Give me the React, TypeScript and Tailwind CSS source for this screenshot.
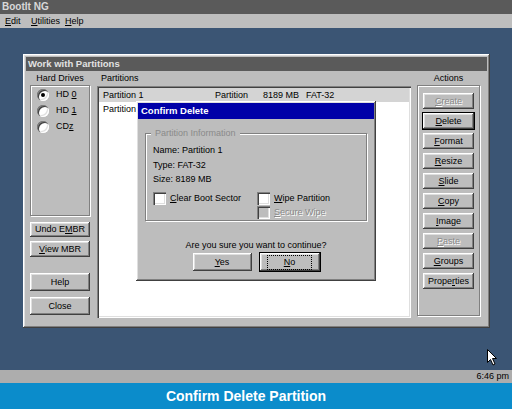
const raised =
  'shadow-[inset_-1px_-1px_0_#404040,inset_1px_1px_0_#ffffff,inset_-2px_-2px_0_#808080,inset_2px_2px_0_#dfdfdf]';
const sunken =
  'shadow-[inset_1px_1px_0_#808080,inset_2px_2px_0_#404040,inset_-1px_-1px_0_#ffffff,inset_-2px_-2px_0_#dfdfdf]';
const etched = 'border border-[#808080] shadow-[1px_1px_0_#ffffff,inset_1px_1px_0_#ffffff]';

function Btn({
  children,
  className = '',
  disabled,
  isDefault,
}: {
  children: React.ReactNode;
  className?: string;
  disabled?: boolean;
  isDefault?: boolean;
}) {
  return (
    <div
      className={`flex items-center justify-center bg-[#bdbdbd] text-[9px] leading-none whitespace-nowrap ${raised} ${
        isDefault ? 'outline outline-1 outline-black' : ''
      } ${disabled ? 'text-[#8a8a8a] [text-shadow:1px_1px_0_#ffffff]' : 'text-black'} ${className}`}
    >
      <span>{children}</span>
    </div>
  );
}

function Radio({ checked, children }: { checked?: boolean; children: React.ReactNode }) {
  return (
    <div className="flex items-center h-[16px]">
      <div className={`w-[12px] h-[12px] rounded-full bg-white flex items-center justify-center ${sunken}`}>
        {checked && <div className="w-[4px] h-[4px] rounded-full bg-black" />}
      </div>
      <span className="ml-[7px] text-[9px] whitespace-nowrap">{children}</span>
    </div>
  );
}

function Check({ children, disabled }: { children: React.ReactNode; disabled?: boolean }) {
  return (
    <div className="flex items-center h-[14px]">
      <div className={`w-[13px] h-[13px] shrink-0 ${disabled ? 'bg-[#bdbdbd]' : 'bg-white'} ${sunken}`} />
      <span
        className={`ml-[4px] text-[9px] whitespace-nowrap ${
          disabled ? 'text-[#8a8a8a] [text-shadow:1px_1px_0_#ffffff]' : 'text-black'
        }`}
      >
        {children}
      </span>
    </div>
  );
}

export default function App() {
  const actions: { label: React.ReactNode; disabled?: boolean; def?: boolean }[] = [
    { label: <><u>C</u>reate</>, disabled: true },
    { label: <><u>D</u>elete</>, def: true },
    { label: <><u>F</u>ormat</> },
    { label: <><u>R</u>esize</> },
    { label: <><u>S</u>lide</> },
    { label: <><u>C</u>opy</> },
    { label: <><u>I</u>mage</> },
    { label: <><u>P</u>aste</>, disabled: true },
    { label: <><u>G</u>roups</> },
    { label: <>Prope<u>r</u>ties</> },
  ];

  return (
    <div className="w-[512px] h-[409px] flex flex-col overflow-hidden font-['Liberation_Sans',Arial,sans-serif] text-black">
      {/* app title */}
      <div className="h-[14px] bg-[#5a5a5a] text-[#d8d8d8] font-bold text-[10px] leading-[14px] pl-[2px]">
        BootIt NG
      </div>
      {/* menu */}
      <div className="h-[14px] bg-[#bebebe] flex items-center text-[9px] leading-none pl-[5px]">
        <span className="w-[26px]"><u>E</u>dit</span>
        <span className="w-[34px]"><u>U</u>tilities</span>
        <span><u>H</u>elp</span>
      </div>

      {/* desktop */}
      <div className="relative flex-1 bg-[#3b5574]">
        <div className={`ml-[23px] mt-[26px] w-[467px] h-[274px] bg-[#bdbdbd] p-[3px] flex flex-col ${raised}`}>
          <div className="h-[14px] bg-[#5a5a5a] text-[#e2e2e2] font-bold text-[9.5px] leading-[14px] pl-[2px]">
            Work with Partitions
          </div>
          <div className="flex flex-1 pl-[4px]">
            {/* left column */}
            <div className="w-[60px] flex flex-col">
              <div className="h-[14px] text-[9px] leading-[14px] text-center">Hard Drives</div>
              <div className={`h-[131px] pl-[6px] pt-[1px] ${etched}`}>
                <Radio checked>HD <u>0</u></Radio>
                <Radio>HD <u>1</u></Radio>
                <Radio>CD<u>z</u></Radio>
              </div>
              <Btn className="mt-[6px] h-[15px]">Undo E<u>M</u>BR</Btn>
              <Btn className="mt-[4px] h-[16px]"><u>V</u>iew MBR</Btn>
              <Btn className="mt-[16px] h-[18px]">Help</Btn>
              <Btn className="mt-[6px] h-[18px]">Close</Btn>
            </div>

            {/* partitions list */}
            <div className="ml-[7px] w-[314px] flex flex-col">
              <div className="h-[15px] text-[9px] leading-[14px] pl-[4px]">Partitions</div>
              <div className={`h-[232px] bg-white p-[2px] ${sunken}`}>
                <div className="h-[14px] bg-[#d4d4d4] flex items-center text-[9px] leading-none pl-[4px] whitespace-nowrap">
                  <span className="w-[112px]">Partition 1</span>
                  <span className="w-[48px]">Partition</span>
                  <span className="w-[43px]">8189 MB</span>
                  <span>FAT-32</span>
                </div>
                <div className="h-[15px] flex items-center text-[9px] leading-none pl-[4px]">Partition</div>
              </div>
            </div>

            {/* actions */}
            <div className="ml-[6px] w-[63px] flex flex-col">
              <div className="h-[14px] text-[9px] leading-[14px] text-center">Actions</div>
              <div className={`h-[231px] flex flex-col items-center pt-[7px] gap-[4px] ${etched}`}>
                {actions.map((a, i) => (
                  <Btn key={i} className="w-[51px] h-[16px]" disabled={a.disabled} isDefault={a.def}>
                    {a.label}
                  </Btn>
                ))}
              </div>
            </div>
          </div>
        </div>

        {/* confirm dialog */}
        <div className={`absolute left-[136px] top-[73px] w-[240px] h-[180px] bg-[#bdbdbd] p-[2px] flex flex-col ${raised}`}>
          <div className="h-[16px] bg-[#0000a8] text-white font-bold text-[9.5px] leading-[16px] pl-[3px]">
            Confirm Delete
          </div>
          <div className={`relative mx-[7px] mt-[14px] h-[88px] pl-[7px] pt-[9px] ${etched}`}>
            <span className="absolute -top-[7px] left-[5px] px-[4px] bg-[#bdbdbd] text-[9px] leading-[13px] text-[#8a8a8a]">
              Partition Information
            </span>
            <div className="text-[9px] leading-[14.5px]">
              <div>Name: Partition 1</div>
              <div>Type: FAT-32</div>
              <div>Size: 8189 MB</div>
            </div>
            <div className="flex mt-[5px]">
              <div className="w-[104px]">
                <Check><u>C</u>lear Boot Sector</Check>
              </div>
              <div className="flex flex-col">
                <Check><u>W</u>ipe Partition</Check>
                <Check disabled><u>S</u>ecure Wipe</Check>
              </div>
            </div>
          </div>
          <div className="mt-[18px] text-center text-[9px] leading-[13px]">Are you sure you want to continue?</div>
          <div className="flex justify-center gap-[8px] mt-[1px]">
            <Btn className="w-[59px] h-[18px]"><u>Y</u>es</Btn>
            <Btn className="w-[60px] h-[18px]" isDefault>
              <span className="inline-block outline outline-1 outline-dotted outline-black px-[16px] py-[2px]"><u>N</u>o</span>
            </Btn>
          </div>
        </div>

        {/* mouse cursor */}
        <svg className="absolute left-[487px] top-[321px]" width="11" height="17" viewBox="0 0 11 17">
          <path d="M0.5 0.5 L0.5 13.5 L3.5 10.5 L6 16 L8 15 L5.5 9.5 L9.5 9.5 Z" fill="#ffffff" stroke="#000000" strokeWidth="1" />
        </svg>
      </div>

      {/* status bar */}
      <div className="h-[13px] bg-[#adadad] text-[9px] leading-[13px] text-right pr-[3px]">6:46 pm</div>
      {/* caption */}
      <div className="h-[26px] bg-[#0b8ccb] text-white font-bold text-[14px] leading-[26px] text-center pr-[20px]">
        Confirm Delete Partition
      </div>
    </div>
  );
}
